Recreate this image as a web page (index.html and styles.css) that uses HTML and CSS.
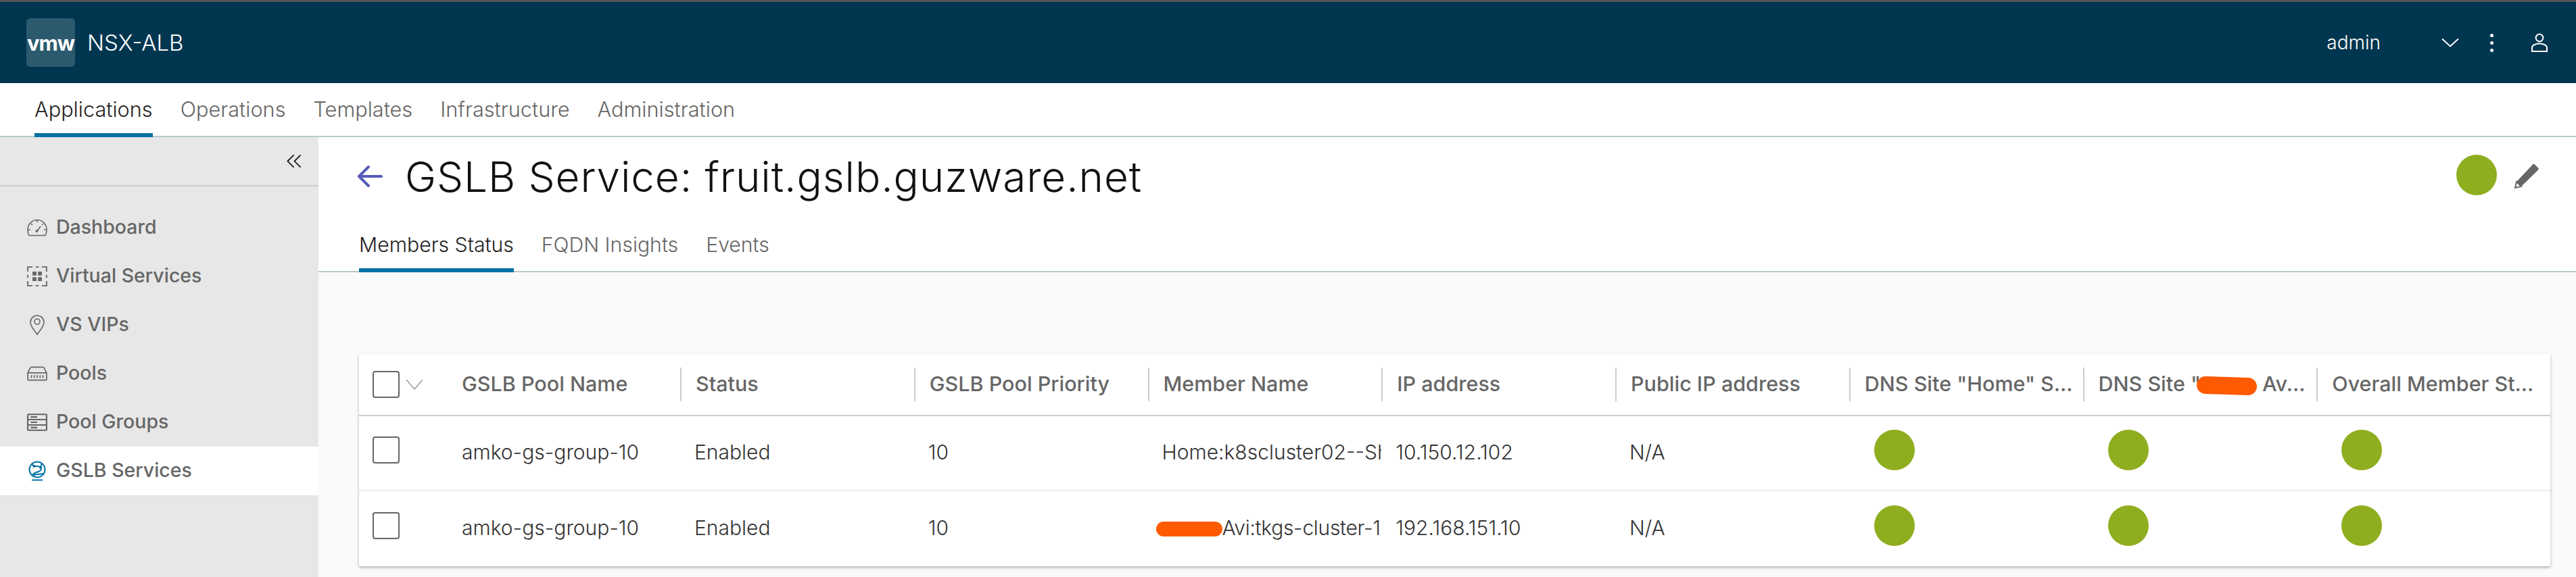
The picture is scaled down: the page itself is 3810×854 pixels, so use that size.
FILE: index.html
```html
<!DOCTYPE html>
<html lang="en">
<head>
    <meta charset="UTF-8">
    <title>GSLB Service: fruit.gslb.guzware.net</title>
    <link rel="stylesheet" href="styles.css">
</head>
<body>
    <header class="topbar">
        <div class="brand">
            <div class="logo">vmw</div>
            <span class="brand-name">NSX-ALB</span>
        </div>
        <div class="topbar-right">
            <span class="user-name">admin</span>
            <svg class="caret" viewBox="0 0 26 14"><path d="M1 1.5 13 12.5 25 1.5"/></svg>
            <div class="kebab"><i></i><i></i><i></i></div>
            <svg class="user-icon" viewBox="0 0 24 28"><circle cx="12" cy="7" r="5.4"/><path d="M1 27v-5.5c0-3 4.5-6 11-6s11 3 11 6V27z"/></svg>
        </div>
    </header>
    <nav class="mainnav">
        <a class="active">Applications</a>
        <a>Operations</a>
        <a>Templates</a>
        <a>Infrastructure</a>
        <a>Administration</a>
    </nav>
    <div class="layout">
        <aside class="sidebar">
            <div class="collapse">
                <svg viewBox="0 0 24 24"><path d="M11.5 1.5 1.5 11.5 11.5 21.5M22.5 1.5 12.5 11.5 22.5 21.5"/></svg>
            </div>
            <ul class="side-menu">
                <li>
                    <svg viewBox="0 0 30 26"><path d="M3 24.5C1.6 22 1 20 1 16.5 1 8 7 1.5 15 1.5S29 8 29 16.5c0 3.500-.6 5.500-2 8z"/><path d="M2 16h3M25 16h3M15 2v3M6 7l2 2M24 7l-2 2M15 18l5-7"/><circle class="fill" cx="14.500" cy="18" r="2"/></svg>
                    <span>Dashboard</span>
                </li>
                <li>
                    <svg viewBox="0 0 26 26"><path d="M1 7V1h6M19 1h6v6M25 19v6h-6M7 25H1v-6M11 1h4M1 11v4M25 11v4M11 25h4"/><path class="fill" d="M7 7h5v5H7zM14 7h5v5h-5zM7 14h5v5H7zM14 14h5v5h-5z"/></svg>
                    <span>Virtual Services</span>
                </li>
                <li>
                    <svg viewBox="0 0 22 30"><path d="M11 29C6 22 1 17 1 11a10 10 0 0 1 20 0c0 6-5 11-10 18z"/><circle cx="11" cy="10" r="4"/></svg>
                    <span>VS VIPs</span>
                </li>
                <li>
                    <svg viewBox="0 0 28 20"><path d="M1 18V9l3.500-7c.3-.6.8-1 1.500-1h16c.7 0 1.200.4 1.500 1L27 9v9c0 .6-.4 1-1 1H2c-.6 0-1-.4-1-1zM1 9h26"/><path d="M6 12v4M10 12v4M14 12v4M18 12v4M22 12v4"/></svg>
                    <span>Pools</span>
                </li>
                <li>
                    <svg class="heavy" viewBox="0 0 28 24"><path d="M2 1h24c.6 0 1 .4 1 1v20c0 .6-.4 1-1 1H2c-.6 0-1-.4-1-1V2c0-.6.4-1 1-1zM1 8.300h26M1 15.700h26M5 4.700h9M5 12h9M5 19.300h9"/></svg>
                    <span>Pool Groups</span>
                </li>
                <li class="current">
                    <svg class="heavy" viewBox="0 0 26 30"><circle cx="13" cy="13" r="11.500"/><path d="M5 3.500c1 3 2 4 3.500 4.500S16 7 18 10s1 4-3 6-7 1-8 5M20 4c-1 2-1.500 4-2 6M7 21l15-2M5 28.500h16"/><circle class="fill" cx="8.500" cy="8" r="2"/><circle class="fill" cx="18" cy="10" r="2"/><circle class="fill" cx="7" cy="21" r="2"/></svg>
                    <span>GSLB Services</span>
                </li>
            </ul>
        </aside>
        <main class="content">
            <div class="page-head">
                <div class="title-row">
                    <svg class="back" viewBox="0 0 38 34"><path d="M36 17H3M17 3 3 17l14 14"/></svg>
                    <h1>GSLB Service: fruit.gslb.guzware.net</h1>
                    <div class="title-actions">
                        <span class="dot"></span>
                        <svg class="pencil" viewBox="0 0 38 38"><path class="body" d="M28 1.500c1-1 2-1 3 0l5 5c1 1 1 2 0 3L11 34 4 27z"/><path class="tip" d="M4 27l7 7-9 2z"/></svg>
                    </div>
                </div>
                <div class="tabs">
                    <a class="active">Members Status</a>
                    <a>FQDN Insights</a>
                    <a>Events</a>
                </div>
            </div>
            <div class="grid">
                <div class="row head">
                    <div class="select"><span class="check"></span><svg class="sel-caret" viewBox="0 0 26 16"><path d="M1 1 13 15 25 1"/></svg></div>
                    <div class="cell">GSLB Pool Name</div>
                    <div class="cell">Status</div>
                    <div class="cell">GSLB Pool Priority</div>
                    <div class="cell">Member Name</div>
                    <div class="cell">IP address</div>
                    <div class="cell">Public IP address</div>
                    <div class="cell">DNS Site "Home" S...</div>
                    <div class="cell">DNS Site "<span class="scribble scribble-head"></span>Av...</div>
                    <div class="cell">Overall Member St...</div>
                </div>
                <div class="row">
                    <div class="select"><span class="check"></span></div>
                    <div class="cell text">amko-gs-group-10</div>
                    <div class="cell text">Enabled</div>
                    <div class="cell text">10</div>
                    <div class="cell text">Home:k8scluster02--Sh</div>
                    <div class="cell text">10.150.12.102</div>
                    <div class="cell text">N/A</div>
                    <div class="cell"><span class="dot"></span></div>
                    <div class="cell"><span class="dot"></span></div>
                    <div class="cell"><span class="dot"></span></div>
                </div>
                <div class="row">
                    <div class="select"><span class="check"></span></div>
                    <div class="cell text">amko-gs-group-10</div>
                    <div class="cell text">Enabled</div>
                    <div class="cell text">10</div>
                    <div class="cell text cell-tight"><span class="scribble"></span>Avi:tkgs-cluster-1</div>
                    <div class="cell text">192.168.151.10</div>
                    <div class="cell text">N/A</div>
                    <div class="cell"><span class="dot"></span></div>
                    <div class="cell"><span class="dot"></span></div>
                    <div class="cell"><span class="dot"></span></div>
                </div>
            </div>
        </main>
    </div>
</body>
</html>
```

FILE: styles.css
```css
* {
    box-sizing: border-box;
}
body {
    margin: 0;
    height: 854px;
    overflow: hidden;
    background: #fff;
    font-family: "Inter", Arial, sans-serif;
    display: flex;
    flex-direction: column;
}
.topbar {
    height: 123px;
    flex: none;
    background: #00364f;
    border-top: 3px solid #555;
    color: #fff;
    display: flex;
    align-items: center;
    justify-content: space-between;
    padding: 0 42px 0 39px;
}
.brand {
    display: flex;
    align-items: center;
    gap: 18px;
}
.logo {
    width: 72px;
    height: 72px;
    background: #2b5a6e;
    border-radius: 6px;
    display: flex;
    align-items: center;
    justify-content: center;
    font-weight: 700;
    font-size: 31px;
    letter-spacing: -1px;
}
.brand-name {
    font-size: 33px;
    font-weight: 300;
}
.topbar-right {
    display: flex;
    align-items: center;
}
.user-name {
    font-size: 28px;
    font-weight: 300;
    margin-right: 90px;
}
.caret {
    width: 26px;
    height: 14px;
    fill: none;
    stroke: #fff;
    stroke-width: 2;
    margin-right: 46px;
}
.kebab {
    display: flex;
    flex-direction: column;
    gap: 6px;
    margin-right: 56px;
}
.kebab i {
    width: 5px;
    height: 5px;
    border-radius: 50%;
    background: #fff;
}
.user-icon {
    width: 24px;
    height: 28px;
    fill: none;
    stroke: #fff;
    stroke-width: 2;
}
.mainnav {
    height: 80px;
    flex: none;
    display: flex;
    gap: 41px;
    padding-left: 51px;
    border-bottom: 2px solid #b9c9cc;
    font-weight: 300;
    font-size: 30.7px;
    color: #666;
}
.mainnav a {
    line-height: 78px;
    height: 80px;
}
.mainnav .active {
    color: #222;
    border-bottom: 6px solid #0072a3;
}
.layout {
    flex: 1;
    display: flex;
    min-height: 0;
}
.sidebar {
    width: 471px;
    flex: none;
    background: #e7e7e7;
}
.collapse {
    height: 73px;
    border-bottom: 2px solid #ccc;
    display: flex;
    justify-content: flex-end;
    align-items: flex-start;
    padding: 25px 25px 0 0;
}
.collapse svg {
    width: 22px;
    height: 22px;
    fill: none;
    stroke: #111;
    stroke-width: 1.8;
}
.side-menu {
    list-style: none;
    margin: 0;
    padding: 25px 0 0;
}
.side-menu li {
    height: 72px;
    display: flex;
    align-items: center;
    font-weight: 500;
    font-size: 28.5px;
    color: #666;
}
.side-menu span {
    padding-bottom: 4px;
}
.side-menu svg {
    width: 30px;
    height: 30px;
    margin: 0 13px 0 40px;
    fill: none;
    stroke: #666;
    stroke-width: 1.6;
}
.side-menu svg.heavy {
    stroke-width: 2;
}
.side-menu svg .fill {
    fill: #666;
    stroke: none;
}
.side-menu .current {
    background: #fff;
}
.side-menu .current svg {
    stroke: #0072a3;
}
.side-menu .current svg .fill {
    fill: #0072a3;
}
.content {
    flex: 1;
    background: #fafafa;
    min-width: 0;
}
.page-head {
    height: 200px;
    background: #fff;
    border-bottom: 2px solid #b9c9cc;
    padding: 0 54px 0 57px;
    display: flex;
    flex-direction: column;
}
.title-row {
    height: 116px;
    flex: none;
    display: flex;
    align-items: center;
}
.back {
    width: 38px;
    height: 34px;
    fill: none;
    stroke: #565cb8;
    stroke-width: 4;
    stroke-linecap: round;
    stroke-linejoin: round;
    margin-right: 33px;
}
h1 {
    margin: 0;
    font-size: 62px;
    font-weight: 300;
    letter-spacing: 0.9px;
    color: #111;
}
.title-actions {
    margin-left: auto;
    display: flex;
    align-items: center;
    gap: 25px;
}
.title-actions .dot {
    margin-top: -4px;
}
.dot {
    display: block;
    width: 60px;
    height: 60px;
    border-radius: 50%;
    background: #8fae1f;
}
.pencil {
    width: 38px;
    height: 38px;
}
.pencil .body {
    fill: #666;
}
.pencil .tip {
    fill: #fff;
    stroke: #666;
    stroke-width: 2;
}
.tabs {
    display: flex;
    gap: 41px;
    margin-left: 3px;
    font-weight: 300;
    font-size: 30.2px;
    color: #666;
}
.tabs a {
    height: 84px;
    line-height: 86px;
}
.tabs .active {
    color: #222;
    border-bottom: 6px solid #0072a3;
}
.grid {
    margin: 121px 0 0 60px;
    width: 3241px;
    background: #fff;
    box-shadow: 0 2px 4px rgba(0,0,0,0.3);
}
.row {
    display: grid;
    grid-template-columns: 131px 344px repeat(8, 1fr);
    height: 111px;
    align-items: center;
    border-bottom: 2px solid #eee;
    font-weight: 300;
    font-size: 30px;
    color: #333;
}
.row:last-child {
    border-bottom: none;
}
.row.head {
    height: 92px;
    border-bottom: 2px solid #ccc;
    font-weight: 500;
    font-size: 30.5px;
    color: #666;
}
.select {
    padding-left: 20px;
    display: flex;
    align-items: center;
    gap: 9px;
    margin-bottom: 10px;
}
.head .select {
    margin-bottom: 0;
}
.check {
    width: 40px;
    height: 40px;
    border: 2px solid #666;
    border-radius: 4px;
}
.sel-caret {
    width: 26px;
    height: 16px;
    fill: none;
    stroke: #999;
    stroke-width: 1.5;
}
.cell {
    padding-left: 21px;
    white-space: nowrap;
    overflow: hidden;
}
.cell.text {
    padding-bottom: 4px;
}
.head .cell {
    height: 50px;
    line-height: 48px;
    border-left: 2px solid #ccc;
}
.head .cell:nth-child(2) {
    border-left: none;
}
.row .cell .dot {
    margin: 0 0 10px 16px;
}
.cell-tight {
    padding-left: 12px;
    letter-spacing: -0.3px;
}
.scribble {
    display: inline-block;
    width: 98px;
    height: 22px;
    background: #ff5a00;
    border-radius: 11px;
    vertical-align: middle;
}
.scribble-head {
    width: 89px;
    height: 26px;
    margin: 0 8px 0 -6px;
    border-radius: 13px;
    transform: rotate(2deg);
}
```
